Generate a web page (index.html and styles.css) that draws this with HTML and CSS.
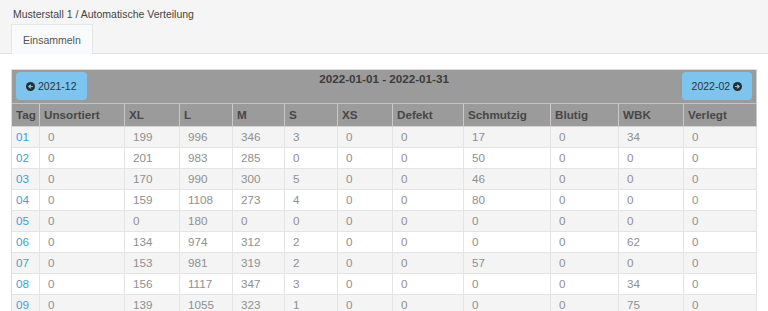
FILE: index.html
```html
<!DOCTYPE html>
<html lang="de">
<head>
<meta charset="utf-8">
<title>Automatische Verteilung</title>
<link rel="stylesheet" href="styles.css">
</head>
<body>
<header class="topbar">
  <div class="crumb">Musterstall 1 / Automatische Verteilung</div>
  <nav class="tabs"><span class="tab">Einsammeln</span></nav>
</header>
<main class="content">
  <table class="grid">
    <colgroup>
      <col class="w28"><col class="w85"><col class="w55"><col class="w53"><col class="w52"><col class="w53"><col class="w55"><col class="w71"><col class="w87"><col class="w68"><col class="w65"><col class="w73">
    </colgroup>
    <thead>
      <tr>
        <th colspan="12" class="titlecell">
          <div class="titlebar">
            <a class="btn" href="#"><svg class="ico" viewBox="0 0 10 10"><circle cx="5" cy="5" r="5" fill="#2b2b2b"/><path d="M2.2 5 L4.9 2.4 L5.9 3.4 L4.8 4.4 H7.8 V5.6 H4.8 L5.9 6.6 L4.9 7.6 Z" fill="#7dc5ef"/></svg>2021-12</a>
            <div class="range">2022-01-01 - 2022-01-31</div>
            <a class="btn" href="#">2022-02<svg class="ico after" viewBox="0 0 10 10"><circle cx="5" cy="5" r="5" fill="#2b2b2b"/><path d="M7.8 5 L5.1 2.4 L4.1 3.4 L5.2 4.4 H2.2 V5.6 H5.2 L4.1 6.6 L5.1 7.6 Z" fill="#7dc5ef"/></svg></a>
          </div>
        </th>
      </tr>
      <tr class="heads">
        <th>Tag</th><th>Unsortiert</th><th>XL</th><th>L</th><th>M</th><th>S</th><th>XS</th><th>Defekt</th><th>Schmutzig</th><th>Blutig</th><th>WBK</th><th>Verlegt</th>
      </tr>
    </thead>
    <tbody>
      <tr><td class="day"><a href="#">01</a></td><td>0</td><td>199</td><td>996</td><td>346</td><td>3</td><td>0</td><td>0</td><td>17</td><td>0</td><td>34</td><td>0</td></tr>
      <tr><td class="day"><a href="#">02</a></td><td>0</td><td>201</td><td>983</td><td>285</td><td>0</td><td>0</td><td>0</td><td>50</td><td>0</td><td>0</td><td>0</td></tr>
      <tr><td class="day"><a href="#">03</a></td><td>0</td><td>170</td><td>990</td><td>300</td><td>5</td><td>0</td><td>0</td><td>46</td><td>0</td><td>0</td><td>0</td></tr>
      <tr><td class="day"><a href="#">04</a></td><td>0</td><td>159</td><td>1108</td><td>273</td><td>4</td><td>0</td><td>0</td><td>80</td><td>0</td><td>0</td><td>0</td></tr>
      <tr><td class="day"><a href="#">05</a></td><td>0</td><td>0</td><td>180</td><td>0</td><td>0</td><td>0</td><td>0</td><td>0</td><td>0</td><td>0</td><td>0</td></tr>
      <tr><td class="day"><a href="#">06</a></td><td>0</td><td>134</td><td>974</td><td>312</td><td>2</td><td>0</td><td>0</td><td>0</td><td>0</td><td>62</td><td>0</td></tr>
      <tr><td class="day"><a href="#">07</a></td><td>0</td><td>153</td><td>981</td><td>319</td><td>2</td><td>0</td><td>0</td><td>57</td><td>0</td><td>0</td><td>0</td></tr>
      <tr><td class="day"><a href="#">08</a></td><td>0</td><td>156</td><td>1117</td><td>347</td><td>3</td><td>0</td><td>0</td><td>0</td><td>0</td><td>34</td><td>0</td></tr>
      <tr><td class="day"><a href="#">09</a></td><td>0</td><td>139</td><td>1055</td><td>323</td><td>1</td><td>0</td><td>0</td><td>0</td><td>0</td><td>75</td><td>0</td></tr>
    </tbody>
  </table>
</main>
</body>
</html>
```
FILE: styles.css
```css
html, body {
  margin: 0;
  padding: 0;
  overflow: hidden;
  background: #ffffff;
  font-family: "Liberation Sans", Arial, sans-serif;
  color: #444;
}

.topbar {
  background: #f5f5f5;
  border-bottom: 1px solid #e2e2e2;
  height: 54px;
  box-sizing: border-box;
  padding: 6px 0 0 11px;
}

.crumb {
  font-size: 10.5px;
  line-height: 16px;
  color: #444;
  padding-left: 2px;
}

.tabs {
  display: flex;
  margin-top: 2px;
}

.tab {
  display: block;
  height: 30px;
  line-height: 30px;
  box-sizing: border-box;
  padding: 0 11px;
  font-size: 10.5px;
  color: #555;
  background: #f9fafb;
  border: 1px solid #e6e6e6;
  border-bottom: none;
}

.content {
  padding: 15px 0 0 11px;
}

.grid {
  table-layout: fixed;
  width: 746px;
  border-collapse: separate;
  border-spacing: 0;
  border-left: 1px solid #dcdcdc;
  border-top: 1px solid #dcdcdc;
  font-size: 11.67px;
}

.w28 { width: 28px; }
.w52 { width: 52px; }
.w53 { width: 53px; }
.w55 { width: 55px; }
.w65 { width: 65px; }
.w68 { width: 68px; }
.w71 { width: 71px; }
.w73 { width: 73px; }
.w85 { width: 85px; }
.w87 { width: 87px; }

.grid th,
.grid td {
  border-right: 1px solid #e4e4e4;
  border-bottom: 1px solid #e4e4e4;
  text-align: left;
  white-space: nowrap;
  overflow: hidden;
}

.titlecell {
  background: #9b9b9b;
  padding: 2px 4px 3px 4px;
  border-right-color: #cfcfcf !important;
  border-bottom-color: #c4c4c4 !important;
}

.titlebar {
  display: flex;
  justify-content: space-between;
  align-items: flex-start;
  height: 28px;
}

.range {
  font-weight: bold;
  color: #3c3c3c;
  line-height: 13px;
}

.btn {
  display: flex;
  align-items: center;
  height: 28px;
  box-sizing: border-box;
  padding: 0 10px;
  background: #7dc5ef;
  border-radius: 4px;
  color: #333;
  text-decoration: none;
  font-size: 10.5px;
  font-weight: normal;
}

.ico {
  width: 9px;
  height: 9px;
  margin-right: 3px;
}

.ico.after {
  margin-right: 0;
  margin-left: 3px;
}

.heads th {
  background: #9b9b9b;
  color: #474747;
  font-weight: bold;
  height: 22px;
  line-height: 22px;
  padding: 0 4px;
  border-right-color: #c9c9c9;
  border-bottom-color: #d4d4d4;
}

.grid td {
  height: 20px;
  line-height: 20px;
  padding: 0 8px;
  color: #8f8f8f;
}

.grid td.day {
  padding: 0 4px;
}

.day a {
  color: #3d9fdc;
  text-decoration: none;
}

.grid tbody tr:nth-child(odd) td {
  background: #f4f4f4;
}
```
